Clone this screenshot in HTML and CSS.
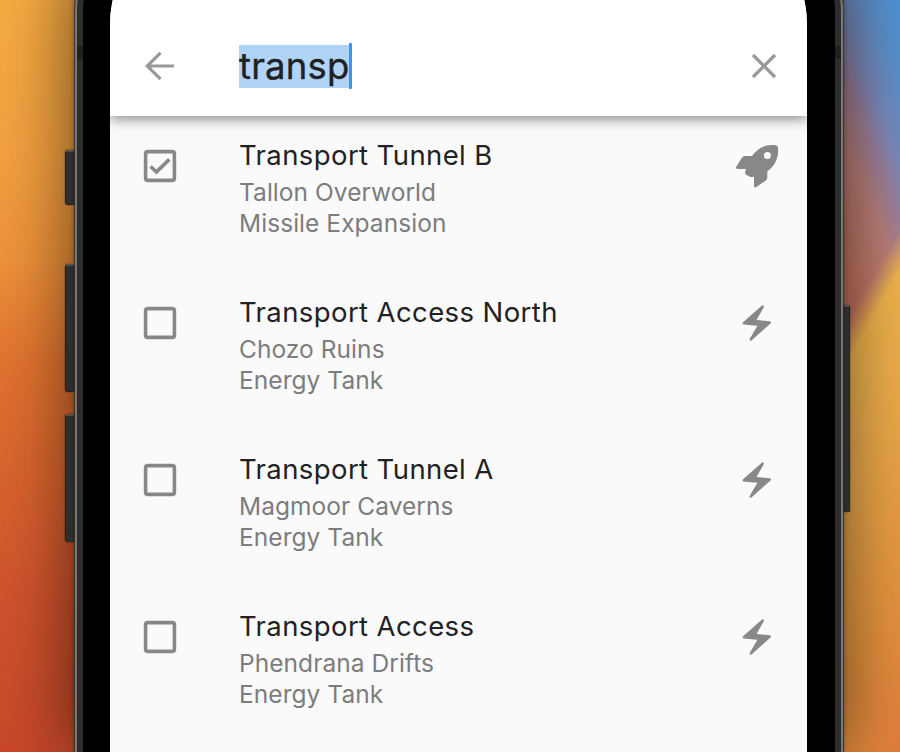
FILE: index.html
```
<!DOCTYPE html>
<html lang="en">
<head>
<meta charset="utf-8">
<title>Item search</title>
<link rel="stylesheet" href="styles.css">
</head>
<body>
<svg class="defs" width="0" height="0" aria-hidden="true">
  <symbol id="box" viewBox="0 0 34 34"><rect x="2.6" y="2.6" width="28.8" height="28.8" rx="2.2"/></symbol>
  <symbol id="checked" viewBox="0 0 34 34"><rect x="2.6" y="2.6" width="28.8" height="28.8" rx="2.2"/><path d="M7.6 17.5 13.5 23.1 26.3 10.4"/></symbol>
  <symbol id="bolt" viewBox="0 0 30 36"><path stroke="#888" stroke-width="2.6" stroke-linejoin="round" d="M20.6 1.7 2 18.3 17.4 19.8 8.9 34.3 27.7 17.5 12.4 16Z"/></symbol>
  <symbol id="rocket" viewBox="0 0 44 44"><path fill-rule="evenodd" d="M17 12.1C22 4.3 31 .2 39.5 1.1Q43 1.1 43 4.8C43.8 13.5 39.7 22.3 32.3 27.2V33.6Q32.3 35.4 30.6 36.8L21 43.2Q19 44.1 19 41.7V32.4Q16.3 34 14 31.9C11.3 31.8 9.7 30 10.2 27.8L11.1 25H3Q.4 25 1.3 22.8L6.4 14.5Q7.8 12.1 10.2 12.1ZM32.4 8.1A3.5 3.5 0 1 0 32.4 15.1A3.5 3.5 0 1 0 32.4 8.1Z"/></symbol>
</svg>
<div class="phone">
  <i class="button mute"></i><i class="button up"></i><i class="button down"></i><i class="button power"></i>
  <i class="band"></i>
  <div class="bezel">
    <main class="screen">
      <header class="search">
        <svg class="back" viewBox="0 0 30 30"><path d="M15.5 1.8 2.2 15 15.5 28.2M2.2 15H29"/></svg>
        <div class="query"><span>transp</span></div>
        <svg class="clear" viewBox="0 0 26 26"><path d="M2 2 24 24M24 2 2 24"/></svg>
      </header>
      <ul class="results">
        <li><svg class="check"><use href="#checked"/></svg><div class="text"><h2>Transport Tunnel B</h2><p>Tallon Overworld</p><p>Missile Expansion</p></div><svg class="rocket"><use href="#rocket"/></svg></li>
        <li><svg class="check"><use href="#box"/></svg><div class="text"><h2>Transport Access North</h2><p>Chozo Ruins</p><p>Energy Tank</p></div><svg class="bolt"><use href="#bolt"/></svg></li>
        <li><svg class="check"><use href="#box"/></svg><div class="text"><h2>Transport Tunnel A</h2><p>Magmoor Caverns</p><p>Energy Tank</p></div><svg class="bolt"><use href="#bolt"/></svg></li>
        <li><svg class="check"><use href="#box"/></svg><div class="text"><h2>Transport Access</h2><p>Phendrana Drifts</p><p>Energy Tank</p></div><svg class="bolt"><use href="#bolt"/></svg></li>
      </ul>
    </main>
  </div>
</div>
</body>
</html>
```
FILE: styles.css
```
* { box-sizing: border-box; }
body {
  margin: 0; width: 900px; height: 752px; overflow: hidden;
  font-family: Inter, "Liberation Sans", sans-serif;
  background:
    linear-gradient(180deg, #f7ab43 0, #f3a03f 160px, #ee923a 260px, #e17430 360px, #d8632d 480px, #d0532d 600px, #c84829 752px) 0 0 / 450px 752px no-repeat,
    linear-gradient(120deg, transparent 163px, #f0b44c 184px, #edaa49 250px, #e8973f 330px, #e4803c 424px) 844px 0 / 56px 752px no-repeat,
    linear-gradient(249deg, #4f93d6 0, #5c91cc 30px, #7c8abb 58px, #a08098 80px, #bc8078 102px, #c47560 150px) 844px 0 / 56px 752px no-repeat,
    #333;
}
.defs { position: absolute; }
.phone {
  position: relative; width: 770px; height: 832px; margin: -80px 56px 0 74px; padding: 0 9px;
  border-radius: 92px 92px 0 0;
  background: #2d2d2d;
  box-shadow: inset 1px 0 #3d3832, inset -1px 0 #3d3832, inset 3px 0 #777, inset -3px 0 #777, 0 0 4px rgba(0,0,0,.35), 0 0 70px 4px rgba(0,0,0,.55);
}
.button { position: absolute; width: 9px; background: #2e2e2e; border: 1px solid #25211e; border-top: 2px solid #55514d; border-radius: 3px 0 0 3px; box-shadow: 0 0 2px rgba(0,0,0,.5); left: -9px; }
.mute { top: 230px; height: 55px; }
.up { top: 344px; height: 128px; }
.down { top: 494px; height: 128px; }
.power { left: auto; right: -6px; width: 6px; top: 385px; height: 207px; border-radius: 0 2px 2px 0; }
.band { position: absolute; left: 3px; right: 3px; top: 126px; height: 13px; background: #202020; }
.bezel { position: relative; height: 100%; padding: 0 27px; background: #000; border-radius: 92px 92px 0 0; }
.screen { width: 697px; height: 100%; background: #fafafa; border-radius: 104px 104px 0 0; overflow: hidden; }
.search {
  height: 196px; padding: 80px 30px 0 35px; display: flex; background: #fff;
  position: relative; box-shadow: 0 3px 12px rgba(0,0,0,.45);
}
.search svg { fill: none; stroke: #999; stroke-width: 3.2; flex: none; }
.back { width: 30px; height: 30px; margin-top: 51px; }
.clear { width: 26px; height: 26px; margin: 53px 0 0 auto; }
.query { margin: 43px 0 0 64px; height: 46px; border-right: 3px solid #3f93ec; border-radius: 1px; font-size: 36.5px; color: #202124; letter-spacing: .2px; -webkit-text-stroke: .35px #202124; }
.query span { display: block; height: 43px; line-height: 42px; margin-top: 2px; background: #b0d4f6; width: 110px; }
.results { list-style: none; margin: 0; padding: 11px 0 0; }
.results li { height: 157px; display: flex; padding: 10px 28px 0 33px; color: #888; }
.check { width: 34px; height: 34px; margin-top: 12px; flex: none; fill: none; stroke: #888; stroke-width: 3.6; }
.text { margin-left: 62px; white-space: nowrap; }
h2 { margin: 0; font-size: 27.5px; font-weight: 400; line-height: 36px; color: #222; letter-spacing: .4px; }
p { margin: 0; font-size: 24.5px; line-height: 30.5px; color: #7d7d7d; letter-spacing: .05px; }
p:first-of-type { margin-top: 4px; }
.rocket, .bolt { fill: #888; margin-left: auto; flex: none; }
.rocket { width: 44px; height: 44px; margin-top: 7px; }
.bolt { width: 30px; height: 36px; margin: 11px 7px 0 auto; }
```
